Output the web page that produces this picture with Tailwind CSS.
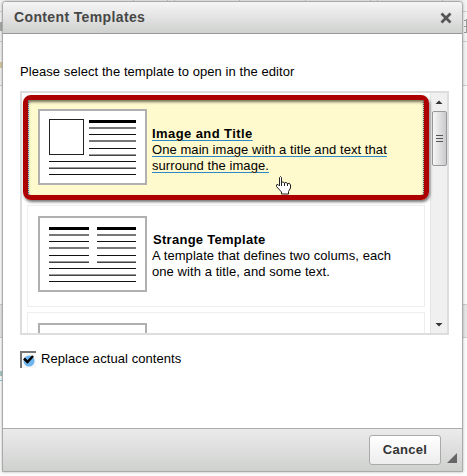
<!DOCTYPE html>
<html lang="en">
<head>
<meta charset="utf-8">
<title>Content Templates</title>
<script src="https://cdn.jsdelivr.net/npm/@tailwindcss/browser@4"></script>
</head>
<body class="relative h-[476px] w-[467px] overflow-hidden bg-[#f3f3f3] font-['Liberation_Sans',Arial,sans-serif] text-[13px] leading-4 tracking-[0.07px] text-black">
<!-- page behind the dialog -->
<svg class="absolute inset-0" width="467" height="476" shape-rendering="crispEdges">
  <rect x="0" y="86" width="467" height="218" fill="#fbfbfb"/>
  <path d="M0 11.500H467M0 41.500H467M0 85.500H467M0 304.500H467M0 337.500H467M133.500 0V3M167.500 0V3M174.500 0V3M239.500 0V3M305.500 0V3M370.500 0V3M377.500 0V3M442.500 0V3" stroke="#ccc"/>
  <rect x="0" y="305" width="467" height="32" fill="#e6e6e6"/>
  <rect x="0" y="338" width="467" height="138" fill="#fcfcfc"/>
  <rect x="0" y="22" width="2" height="9" fill="#aaa"/>
  <rect x="0" y="62" width="2" height="6" fill="#d5c9a0"/>
  <rect x="0" y="371" width="2" height="5" fill="#a9c9c4"/>
  <rect x="0" y="380" width="3" height="1" fill="#7fd0d4"/>
  <path d="M464 20H467M464 32.500H467M464 26.500H467M466.500 19V33" stroke="#999"/>
</svg>
<!-- dialog -->
<div class="relative ml-[2px] mt-px flex h-[471px] w-[461px] flex-col rounded-t-[4px] border border-[#aaa] bg-white shadow-[0_0_3px_rgba(0,0,0,0.3)]">
  <div class="flex h-8 shrink-0 items-center justify-between rounded-t-[3px] border-b border-[#999] bg-linear-to-b from-[#f5f5f5] to-[#cfd1cf] pl-[11px] pr-[10px]">
    <h1 class="pb-px text-[14px] font-bold tracking-[0.37px] text-[#474747]">Content Templates</h1>
    <svg width="12" height="12" viewBox="0 0 12 12"><path d="M1.500 1.500L10.500 10.500M10.500 1.500L1.500 10.500" stroke="#555" stroke-width="2.700"/></svg>
  </div>
  <div class="flex-1 px-[17px] pt-[30px]">
    <p class="whitespace-nowrap">Please select the template to open in the editor</p>
    <div class="relative mt-[11px] flex h-[244px] w-[429px] overflow-hidden border-2 border-[#ddd]">
      <div class="flex w-[408px] shrink-0 flex-col gap-[5px] pl-[5px] pt-[5px]">
        <div class="flex h-[102px] w-[398px] shrink-0 bg-[#fffacd] pl-[11px] pt-[11px]">
          <svg width="109" height="76" shape-rendering="crispEdges">
            <rect x="1" y="1" width="107" height="74" fill="#fff" stroke="#b0b0b0" stroke-width="2"/>
            <rect x="11.500" y="10.500" width="34" height="35" fill="#fff" stroke="#222"/>
            <path d="M51 12.500H98" stroke="#000" stroke-width="3"/>
            <path d="M51 19H98M51 32H98" stroke="#777" stroke-width="2"/>
            <path d="M51 25.500H98M51 39.500H98M11 52.500H98M11 65.500H98" stroke="#111"/>
            <path d="M51 45.500H98M11 58.500H98" stroke="#999"/><path d="M51 46.500H98M11 59.500H98" stroke="#444"/>
          </svg>
          <div class="whitespace-nowrap pl-[5px] pt-[17px] underline decoration-[#2d87c8] decoration-1 underline-offset-2"><b class="tracking-[0.42px]">Image and Title</b><br>One main image with a title and text that<br>surround the image.</div>
        </div>
        <div class="flex h-[102px] w-[398px] shrink-0 border border-[#eee] pl-[10px] pt-[10px]">
          <svg width="109" height="76" shape-rendering="crispEdges">
            <rect x="1" y="1" width="107" height="74" fill="#fff" stroke="#b0b0b0" stroke-width="2"/>
            <path d="M11 12.500H51M59 12.500H98" stroke="#000" stroke-width="3"/>
            <path d="M11 19H51M59 19H98M11 32H51M59 32H98" stroke="#777" stroke-width="2"/>
            <path d="M11 25.500H51M59 25.500H98M11 39.500H51M59 39.500H98M11 52.500H98M11 65.500H98" stroke="#111"/>
            <path d="M11 45.500H51M59 45.500H98M11 58.500H98" stroke="#999"/><path d="M11 46.500H51M59 46.500H98M11 59.500H98" stroke="#444"/>
          </svg>
          <div class="whitespace-nowrap pl-[5px] pt-4"><b class="pl-px tracking-[0.28px]">Strange Template</b><br>A template that defines two colums, each<br>one with a title, and some text.</div>
        </div>
        <div class="flex h-[102px] w-[398px] shrink-0 border border-[#eee] pl-[10px] pt-[10px]">
          <div class="h-[76px] w-[109px] border-2 border-[#b0b0b0]"></div>
        </div>
      </div>
      <div class="flex w-[17px] shrink-0 flex-col items-center border-l border-[#e4e4e4] bg-[#f0f0f0]">
        <svg width="16" height="18"><path d="M4.500 11L8 7.500L11.500 11Z" fill="#333"/></svg>
        <div class="flex h-[55px] w-[15px] flex-col items-center justify-center gap-[2px] rounded-[2px] border border-[#999] bg-linear-to-r from-[#f7f7f7] to-[#cacacd]">
          <i class="h-px w-[7px] bg-[#555]"></i><i class="h-px w-[7px] bg-[#555]"></i><i class="h-px w-[7px] bg-[#555]"></i>
        </div>
        <svg class="mt-auto" width="16" height="17"><path d="M4.500 7L8 10.500L11.500 7Z" fill="#333"/></svg>
      </div>
      <!-- highlight frame over the hovered template -->
      <div class="absolute left-px top-[2px] h-[105px] w-[406px] rounded-[8px] border-5 border-[#ad0000] shadow-[1px_2px_3px_rgba(0,0,0,0.55),inset_0_2px_3px_rgba(0,0,0,0.55)]">
        <div class="h-full border-x border-dotted border-l-[#3a6f9a] border-r-[#555]"></div>
      </div>
      <svg class="absolute left-[252px] top-[82px]" width="18" height="20" viewBox="0 0 18 20"><path d="M5.500 11V2.500Q6.500 .5 7.500 2.500V7.500Q9 6 10.500 8Q12 6.500 13.500 8.500Q16 7.500 16.500 10V13L14.500 16.500V19H7.500V17L2.500 11.500Q2 9 4 9.500Z" fill="#fff" stroke="#222"/><path d="M7.500 7V11M10.500 8V11M13.500 8.500V11" stroke="#222"/></svg>
    </div>
    <label class="mt-[15px] flex h-[18px] items-center gap-[5px]">
      <svg width="16" height="17"><rect width="16" height="17" fill="#f7f7f7"/><path d="M1 17V1H16" fill="none" stroke="#777" stroke-width="2"/><circle cx="9" cy="10" r="5.500" fill="#6cb4ee"/><path d="M4 7.500L7.500 11L13 5" fill="none" stroke="#000" stroke-width="2.500"/></svg>
      <span class="whitespace-nowrap">Replace actual contents</span>
    </label>
  </div>
  <div class="relative flex h-[43px] shrink-0 justify-end border-t border-[#aaa] bg-linear-to-b from-[#ebebeb] to-[#cfd1cf] pr-[21px] pt-[6px]">
    <button class="h-[30px] w-[72px] rounded-[3px] border border-[#aaa] bg-linear-to-b from-white to-[#ededed] text-[13px] font-bold tracking-[0.3px] text-[#333]">Cancel</button>
    <svg class="absolute bottom-[8px] right-[5px]" width="10" height="10"><path d="M10 0V10H0Z" fill="#666"/></svg>
  </div>
</div>
</body>
</html>
